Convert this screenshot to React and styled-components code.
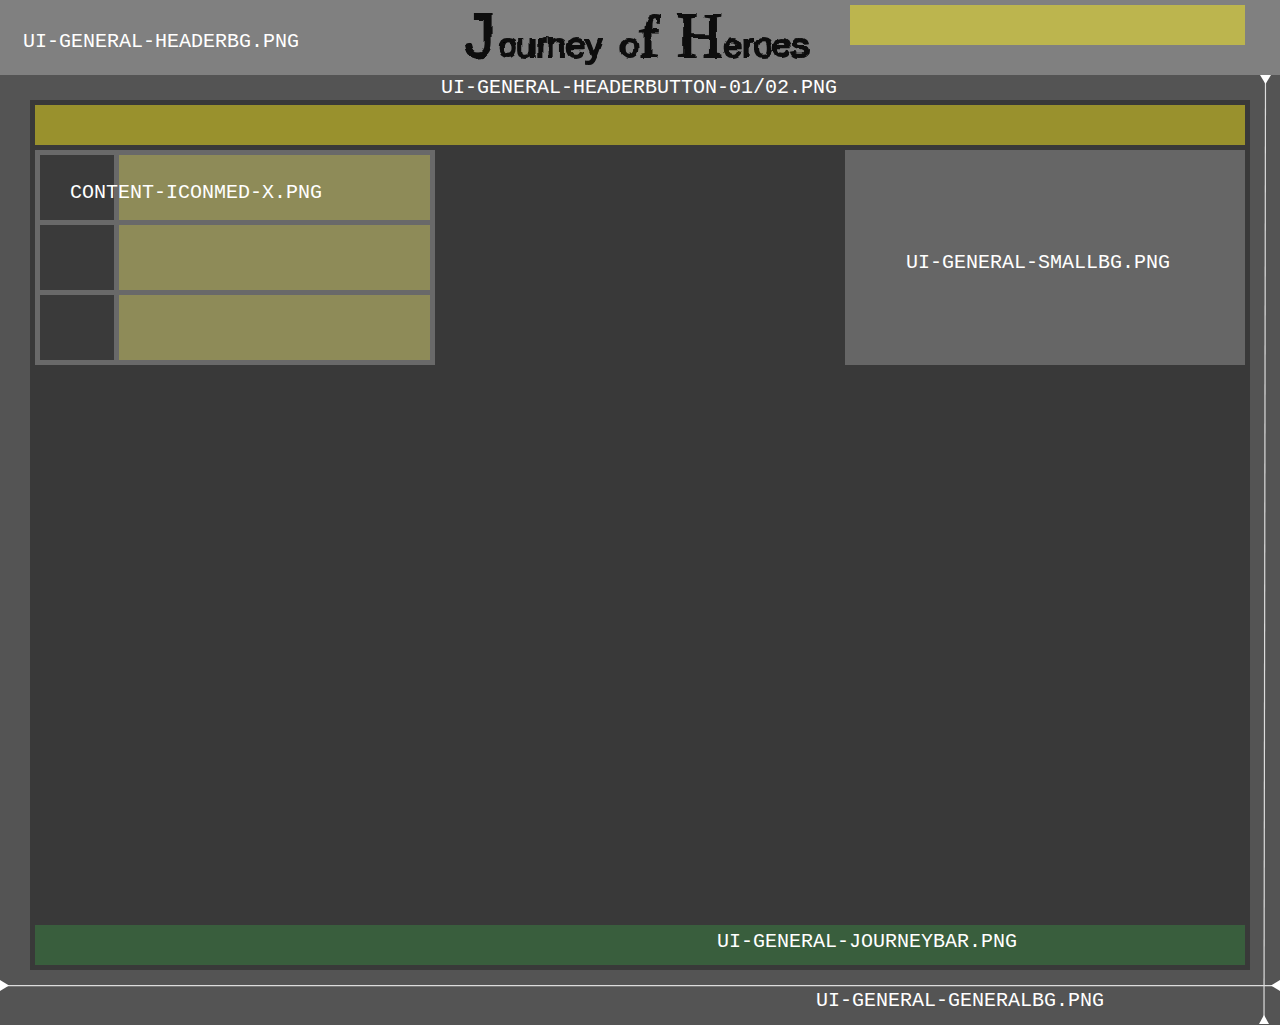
import React from "react";
import styled, { createGlobalStyle } from "styled-components";

const GlobalStyle = createGlobalStyle`
  * { box-sizing: border-box; }
  html, body, #root { height: 100%; }
  body { margin: 0; background: #545454; }
`;

const Page = styled.div`
  position: relative;
  display: flex;
  flex-direction: column;
  min-height: 100vh;
  background: #545454;
  color: #fff;
  font-family: "Liberation Mono", monospace;
  font-size: 20px;
  line-height: 26px;
`;

const Header = styled.header`
  display: grid;
  grid-template-columns: 1fr 350px 1fr;
  align-items: start;
  height: 75px;
  padding-left: 23px;
  padding-right: 35px;
  background: #808080;
`;

const Label = styled.span`
  white-space: nowrap;
`;

const HeaderLabel = styled(Label)`
  padding-top: 29px;
`;

const Logo = styled.h1`
  display: flex;
  justify-content: center;
  align-items: baseline;
  gap: 18px;
  margin: 0;
  color: #080808;
  font: 400 34px/72px "Liberation Sans", sans-serif;
  filter: url(#ink);
  -webkit-text-stroke: 2px #080808;
`;

const Initial = styled.span`
  font-family: ${(p) => p.$family}, serif;
  font-size: 64px;
`;

const Tall = styled.span`
  font-family: "Liberation Serif", serif;
  font-size: 60px;
`;

const HeaderSlot = styled.div`
  justify-self: end;
  width: 395px;
  height: 40px;
  margin-top: 5px;
  background: #bcb54e;
`;

const Caption = styled.div`
  height: 25px;
  padding-right: 2px;
  text-align: center;
`;

const Main = styled.main`
  flex: 1;
  display: flex;
  flex-direction: column;
  gap: 5px;
  margin: 0 30px;
  padding: 5px;
  background: #393939;
`;

const ButtonBar = styled.nav`
  height: 40px;
  background: #99912d;
`;

const Panels = styled.div`
  flex: 1;
  display: flex;
  justify-content: space-between;
  align-items: flex-start;
`;

const List = styled.ul`
  display: flex;
  flex-direction: column;
  gap: 5px;
  width: 400px;
  margin: 0;
  padding: 5px;
  list-style: none;
  background: #696969;
`;

const Row = styled.li`
  display: flex;
  align-items: center;
  height: 65px;
  padding: 10px 0 0 30px;
  background: linear-gradient(to right, #3a3a3a 74px, #696969 74px, #696969 79px, #8e8b58 79px);
`;

const SmallPanel = styled.section`
  display: flex;
  justify-content: center;
  align-items: center;
  width: 400px;
  height: 215px;
  padding: 10px 14px 0 0;
  background: #666;
`;

const JourneyBar = styled.div`
  display: flex;
  justify-content: flex-end;
  height: 40px;
  padding: 4px 228px 0 0;
  background: #395e3d;
`;

const Footer = styled.footer`
  height: 55px;
  padding: 18px 176px 0 0;
  text-align: right;
`;

const WidthArrow = styled.svg`
  position: absolute;
  left: 0;
  bottom: 34px;
  width: 100%;
  height: 11px;
`;

const HeightArrow = styled.svg`
  position: absolute;
  top: 75px;
  right: 9px;
  width: 12px;
  height: calc(100% - 76px);
`;

const FilterDefs = styled.svg`
  position: absolute;
  width: 0;
  height: 0;
`;

export default function App() {
  return (
    <Page>
      <GlobalStyle />
      <FilterDefs aria-hidden="true">
        <filter id="ink" x="-5%" y="-10%" width="110%" height="130%">
          <feTurbulence type="fractalNoise" baseFrequency="0.07" numOctaves="2" seed="4" />
          <feDisplacementMap in="SourceGraphic" scale="5" xChannelSelector="R" yChannelSelector="G" />
        </filter>
      </FilterDefs>
      <Header>
        <HeaderLabel>UI-GENERAL-HEADERBG.PNG</HeaderLabel>
        <Logo>
          <span><Initial $family='"Liberation Mono"'>J</Initial>ourney</span>
          <span>o<Tall>f</Tall></span>
          <span><Initial $family='"Liberation Serif"'>H</Initial>eroes</span>
        </Logo>
        <HeaderSlot />
      </Header>
      <Caption>UI-GENERAL-HEADERBUTTON-01/02.PNG</Caption>
      <Main>
        <ButtonBar />
        <Panels>
          <List>
            <Row><Label>CONTENT-ICONMED-X.PNG</Label></Row>
            <Row />
            <Row />
          </List>
          <SmallPanel><Label>UI-GENERAL-SMALLBG.PNG</Label></SmallPanel>
        </Panels>
        <JourneyBar><Label>UI-GENERAL-JOURNEYBAR.PNG</Label></JourneyBar>
      </Main>
      <Footer>UI-GENERAL-GENERALBG.PNG</Footer>
      <WidthArrow aria-hidden="true">
        <line x1="0" y1="5.6" x2="100%" y2="5.6" stroke="#ddd" strokeWidth="1.2" />
        <path d="M0 0L9 5.5L0 11Z" fill="#fff" />
        <svg x="100%" overflow="visible"><path d="M0 0L-9 5.5L0 11Z" fill="#fff" /></svg>
      </WidthArrow>
      <HeightArrow aria-hidden="true">
        <line x1="6.5" y1="0" x2="5" y2="100%" stroke="#ddd" strokeWidth="1.2" />
        <path d="M1 0H12L6.5 9Z" fill="#fff" />
        <svg y="100%" overflow="visible"><path d="M0 0H10L5 -9Z" fill="#fff" /></svg>
      </HeightArrow>
    </Page>
  );
}
